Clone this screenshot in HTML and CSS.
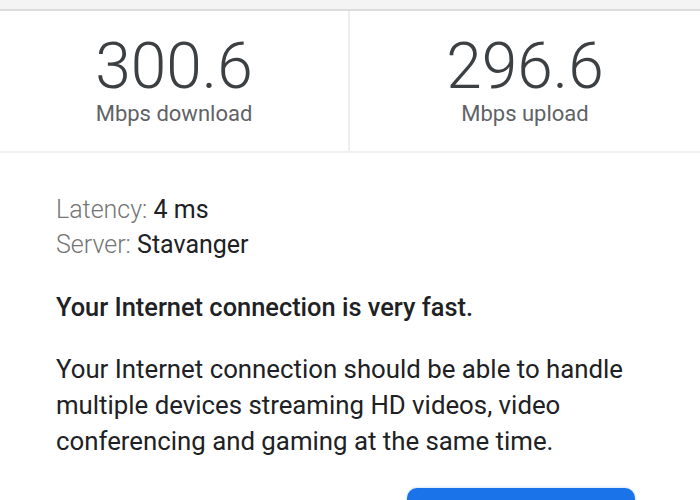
FILE: index.html
```html
<!DOCTYPE html>
<html lang="en">
<head>
    <meta charset="UTF-8">
    <meta name="viewport" content="width=device-width, initial-scale=1.0">
    <title>Speed Test</title>
    <link rel="stylesheet" href="styles.css">
</head>
<body>

<div class="topbar"></div>

<section class="stats">
    <div class="stat">
        <div class="stat-value">300.6</div>
        <div class="stat-label">Mbps download</div>
    </div>
    <div class="stat">
        <div class="stat-value">296.6</div>
        <div class="stat-label">Mbps upload</div>
    </div>
</section>

<section class="details">
    <div class="meta">
        <div><span class="meta-label">Latency:</span> 4 ms</div>
        <div><span class="meta-label">Server:</span> Stavanger</div>
    </div>
    <p class="verdict">Your Internet connection is very fast.</p>
    <p class="summary">Your Internet connection should be able to handle multiple devices streaming HD videos, video conferencing and gaming at the same time.</p>
    <div class="actions">
        <button class="btn-primary">Test again</button>
    </div>
</section>

</body>
</html>
```

FILE: styles.css
```css
* {
    margin: 0;
    padding: 0;
    box-sizing: border-box;
}
body {
    font-family: Roboto, 'Noto Sans', sans-serif;
    background-color: #fff;
    color: #202124;
    overflow: hidden;
}
.topbar {
    height: 11px;
    background-color: #f4f4f4;
    border-bottom: 2px solid #dcdcdc;
}
.stats {
    display: grid;
    grid-template-columns: 1fr 1fr;
    border-bottom: 2px solid #f0f0f0;
}
.stat {
    height: 140px;
    padding-top: 23px;
    text-align: center;
}
.stat:first-child {
    border-right: 2px solid #eee;
}
.stat-value {
    font-size: 64px;
    font-weight: 300;
    line-height: 66px;
    color: #3c4043;
}
.stat-label {
    margin-top: 1px;
    font-size: 22px;
    font-weight: 400;
    line-height: 26px;
    color: #5f6368;
}
.details {
    padding: 0 56px;
}
.meta {
    margin-top: 39px;
    font-size: 25px;
    line-height: 35px;
    color: #202124;
}
.meta-label {
    font-weight: 300;
    color: #757575;
}
.verdict {
    margin-top: 30px;
    font-size: 25.4px;
    font-weight: 500;
    line-height: 30px;
    color: #202124;
}
.summary {
    margin-top: 29px;
    font-size: 25.8px;
    line-height: 36px;
    color: #202124;
}
.actions {
    display: flex;
    justify-content: flex-end;
    padding-right: 9px;
    margin-top: 29px;
}
.btn-primary {
    width: 228px;
    height: 60px;
    border: none;
    border-radius: 10px;
    background-color: #1a73e8;
    color: #fff;
    font-family: inherit;
    font-size: 20px;
    font-weight: 500;
    box-shadow: 0 0 3px rgba(26, 115, 232, 0.35);
}
```
